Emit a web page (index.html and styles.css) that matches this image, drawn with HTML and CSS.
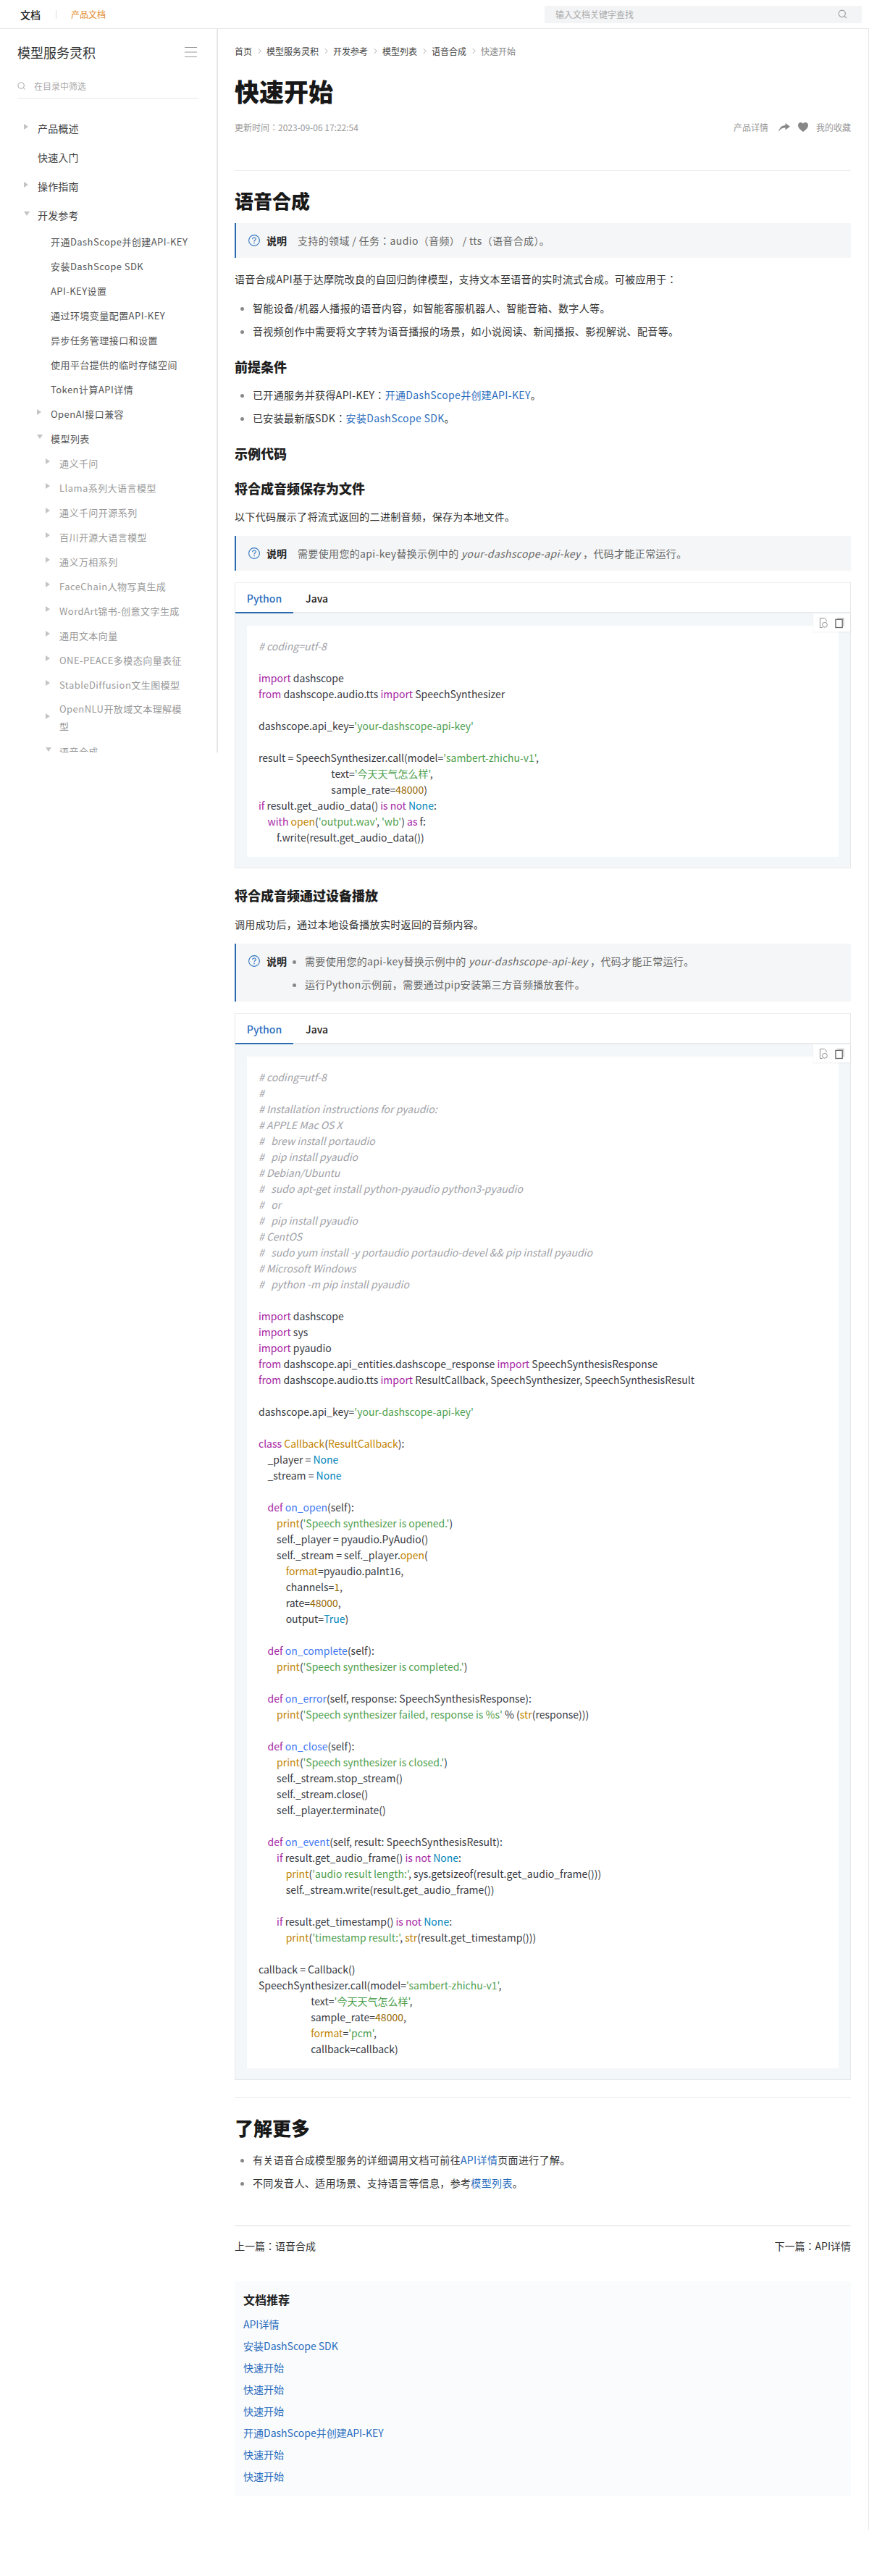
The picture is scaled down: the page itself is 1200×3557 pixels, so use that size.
FILE: index.html
```html
<!DOCTYPE html>
<html>
<head>
<meta charset="utf-8">
<title>快速开始</title>
<link rel="stylesheet" href="styles.css">
</head>
<body>
<header class="topbar">
  <div class="topbar-left">
    <span class="brand">文档</span>
    <span class="brand-sep"></span>
    <span class="brand-link">产品文档</span>
  </div>
  <div class="doc-search">
    <span>输入文档关键字查找</span>
    <svg class="icon-search" viewBox="0 0 14 14"><circle cx="6.2" cy="6.2" r="5" fill="none" stroke="#999" stroke-width="1.1"/><path d="M9.8 9.8 L13 13" stroke="#999" stroke-width="1.1"/></svg>
  </div>
</header>
<div class="layout">
  <aside class="sidebar">
    <div class="side-head">
      <span class="side-title">模型服务灵积</span>
      <svg class="hamburger" viewBox="0 0 17 14"><path d="M0 .5H17M0 7H17M0 13.5H17" stroke="#999" stroke-width="1"/></svg>
    </div>
    <div class="side-filter">
      <svg class="filter-icon" viewBox="0 0 14 14"><circle cx="6" cy="6" r="4.8" fill="none" stroke="#999" stroke-width="1"/><path d="M9.5 9.5 L12.5 12.5" stroke="#999" stroke-width="1"/></svg>
      <span>在目录中筛选</span>
    </div>
    <nav class="tree">
      <div class="row l1"><i class="arr right"></i>产品概述</div>
      <div class="row l1"><i class="arr none"></i>快速入门</div>
      <div class="row l1"><i class="arr right"></i>操作指南</div>
      <div class="row l1 last"><i class="arr down"></i>开发参考</div>
      <div class="row leaf">开通DashScope并创建API-KEY</div>
      <div class="row leaf">安装DashScope SDK</div>
      <div class="row leaf">API-KEY设置</div>
      <div class="row leaf">通过环境变量配置API-KEY</div>
      <div class="row leaf">异步任务管理接口和设置</div>
      <div class="row leaf">使用平台提供的临时存储空间</div>
      <div class="row leaf">Token计算API详情</div>
      <div class="row l2"><i class="arr right"></i>OpenAI接口兼容</div>
      <div class="row l2"><i class="arr down"></i>模型列表</div>
      <div class="row l3"><i class="arr right"></i>通义千问</div>
      <div class="row l3"><i class="arr right"></i>Llama系列大语言模型</div>
      <div class="row l3"><i class="arr right"></i>通义千问开源系列</div>
      <div class="row l3"><i class="arr right"></i>百川开源大语言模型</div>
      <div class="row l3"><i class="arr right"></i>通义万相系列</div>
      <div class="row l3"><i class="arr right"></i>FaceChain人物写真生成</div>
      <div class="row l3"><i class="arr right"></i>WordArt锦书-创意文字生成</div>
      <div class="row l3"><i class="arr right"></i>通用文本向量</div>
      <div class="row l3"><i class="arr right"></i>ONE-PEACE多模态向量表征</div>
      <div class="row l3"><i class="arr right"></i>StableDiffusion文生图模型</div>
      <div class="row l3 wrap"><i class="arr right"></i><span>OpenNLU开放域文本理解模型</span></div>
      <div class="row l3"><i class="arr down"></i>语音合成</div>
    </nav>
  </aside>
  <main class="content">
    <div class="crumbs">
      <span>首页</span><svg class="chev" viewBox="0 0 6 10"><path d="M1 1 L5 5 L1 9" fill="none" stroke="#999"/></svg>
      <span>模型服务灵积</span><svg class="chev" viewBox="0 0 6 10"><path d="M1 1 L5 5 L1 9" fill="none" stroke="#999"/></svg>
      <span>开发参考</span><svg class="chev" viewBox="0 0 6 10"><path d="M1 1 L5 5 L1 9" fill="none" stroke="#999"/></svg>
      <span>模型列表</span><svg class="chev" viewBox="0 0 6 10"><path d="M1 1 L5 5 L1 9" fill="none" stroke="#999"/></svg>
      <span>语音合成</span><svg class="chev" viewBox="0 0 6 10"><path d="M1 1 L5 5 L1 9" fill="none" stroke="#999"/></svg>
      <span class="crumb-cur">快速开始</span>
    </div>
    <h1 class="page-title">快速开始</h1>
    <div class="meta">
      <span>更新时间：2023-09-06 17:22:54</span>
      <div class="meta-actions">
        <span>产品详情</span>
        <svg class="icon-share" viewBox="0 0 16 12"><path d="M9.5 0 L16 4.8 L9.5 9.4 V6.6 C5.5 6.4 2.5 8 0 12 C1 6.5 4.5 3.2 9.5 2.9 Z" fill="#888"/></svg>
        <svg class="icon-heart" viewBox="0 0 14 13"><path d="M7 13 C3 10 0 7.5 0 4 C0 1.6 1.8 0 3.8 0 C5.2 0 6.3.7 7 1.8 C7.7.7 8.8 0 10.2 0 C12.2 0 14 1.6 14 4 C14 7.5 11 10 7 13 Z" fill="#888"/></svg>
        <span>我的收藏</span>
      </div>
    </div>

    <h2 class="h-big first">语音合成</h2>
    <div class="note n-a">
      <svg class="q" viewBox="0 0 16 16"><circle cx="8" cy="8" r="7.4" fill="none" stroke="#2e74c0" stroke-width="1.1"/><path d="M5.7 6.2 C5.7 4.8 6.8 4 8 4 C9.3 4 10.3 4.9 10.3 6 C10.3 7.5 8 7.6 8 9.4" fill="none" stroke="#2e74c0" stroke-width="1.1"/><circle cx="8" cy="11.6" r=".8" fill="#2e74c0"/></svg>
      <b class="note-label">说明</b>
      <div class="note-text">支持的领域 / 任务：audio（音频） / tts（语音合成）。</div>
    </div>
    <p class="para m-17">语音合成API基于达摩院改良的自回归韵律模型，支持文本至语音的实时流式合成。可被应用于：</p>
    <ul class="list m-16">
      <li>智能设备/机器人播报的语音内容，如智能客服机器人、智能音箱、数字人等。</li>
      <li>音视频创作中需要将文字转为语音播报的场景，如小说阅读、新闻播报、影视解说、配音等。</li>
    </ul>
    <h3 class="h-mid m-24">前提条件</h3>
    <ul class="list m-14">
      <li>已开通服务并获得API-KEY：<a>开通DashScope并创建API-KEY</a>。</li>
      <li>已安装最新版SDK：<a>安装DashScope SDK</a>。</li>
    </ul>
    <h3 class="h-mid m-24">示例代码</h3>
    <h3 class="h-mid m-22">将合成音频保存为文件</h3>
    <p class="para m-14">以下代码展示了将流式返回的二进制音频，保存为本地文件。</p>
    <div class="note m-15">
      <svg class="q" viewBox="0 0 16 16"><circle cx="8" cy="8" r="7.4" fill="none" stroke="#2e74c0" stroke-width="1.1"/><path d="M5.7 6.2 C5.7 4.8 6.8 4 8 4 C9.3 4 10.3 4.9 10.3 6 C10.3 7.5 8 7.6 8 9.4" fill="none" stroke="#2e74c0" stroke-width="1.1"/><circle cx="8" cy="11.6" r=".8" fill="#2e74c0"/></svg>
      <b class="note-label">说明</b>
      <div class="note-text">需要使用您的api-key替换示例中的 <em>your-dashscope-api-key</em> ，代码才能正常运行。</div>
    </div>
    <div class="codebox">
      <div class="tabs"><span class="tab on">Python</span><span class="tab">Java</span></div>
      <div class="panel">
        <div class="tools">
          <svg viewBox="0 0 14 16"><path d="M8 1H1.5V15H5M8 1L11 4V6" fill="none" stroke="#888"/><circle cx="8.5" cy="11" r="3.7" fill="none" stroke="#888"/></svg>
          <svg viewBox="0 0 14 16"><rect x="1" y="3" width="10" height="12" fill="none" stroke="#666" stroke-width="1.4"/><path d="M3.5 1H13V13" fill="none" stroke="#aaa"/></svg>
        </div>
        <div class="code">
<div class="ln"><span class="c"># coding=utf-8</span></div>
<div class="ln"></div>
<div class="ln"><span class="k">import</span> dashscope</div>
<div class="ln"><span class="k">from</span> dashscope.audio.tts <span class="k">import</span> SpeechSynthesizer</div>
<div class="ln"></div>
<div class="ln">dashscope.api_key=<span class="s">'your-dashscope-api-key'</span></div>
<div class="ln"></div>
<div class="ln">result = SpeechSynthesizer.call(model=<span class="s">'sambert-zhichu-v1'</span>,</div>
<div class="ln">                                text=<span class="s">'今天天气怎么样'</span>,</div>
<div class="ln">                                sample_rate=<span class="n">48000</span>)</div>
<div class="ln"><span class="k">if</span> result.get_audio_data() <span class="k">is</span> <span class="k">not</span> <span class="l">None</span>:</div>
<div class="ln">    <span class="k">with</span> <span class="b">open</span>(<span class="s">'output.wav'</span>, <span class="s">'wb'</span>) <span class="k">as</span> f:</div>
<div class="ln">        f.write(result.get_audio_data())</div>
        </div>
      </div>
    </div>

    <h3 class="h-mid m-24">将合成音频通过设备播放</h3>
    <p class="para m-15">调用成功后，通过本地设备播放实时返回的音频内容。</p>
    <div class="note m-15">
      <svg class="q" viewBox="0 0 16 16"><circle cx="8" cy="8" r="7.4" fill="none" stroke="#2e74c0" stroke-width="1.1"/><path d="M5.7 6.2 C5.7 4.8 6.8 4 8 4 C9.3 4 10.3 4.9 10.3 6 C10.3 7.5 8 7.6 8 9.4" fill="none" stroke="#2e74c0" stroke-width="1.1"/><circle cx="8" cy="11.6" r=".8" fill="#2e74c0"/></svg>
      <b class="note-label">说明</b>
      <ul class="note-list">
        <li>需要使用您的api-key替换示例中的 <em>your-dashscope-api-key</em> ，代码才能正常运行。</li>
        <li>运行Python示例前，需要通过pip安装第三方音频播放套件。</li>
      </ul>
    </div>
    <div class="codebox">
      <div class="tabs"><span class="tab on">Python</span><span class="tab">Java</span></div>
      <div class="panel">
        <div class="tools">
          <svg viewBox="0 0 14 16"><path d="M8 1H1.5V15H5M8 1L11 4V6" fill="none" stroke="#888"/><circle cx="8.5" cy="11" r="3.7" fill="none" stroke="#888"/></svg>
          <svg viewBox="0 0 14 16"><rect x="1" y="3" width="10" height="12" fill="none" stroke="#666" stroke-width="1.4"/><path d="M3.5 1H13V13" fill="none" stroke="#aaa"/></svg>
        </div>
        <div class="code">
<div class="ln"><span class="c"># coding=utf-8</span></div>
<div class="ln"><span class="c">#</span></div>
<div class="ln"><span class="c"># Installation instructions for pyaudio:</span></div>
<div class="ln"><span class="c"># APPLE Mac OS X</span></div>
<div class="ln"><span class="c">#   brew install portaudio</span></div>
<div class="ln"><span class="c">#   pip install pyaudio</span></div>
<div class="ln"><span class="c"># Debian/Ubuntu</span></div>
<div class="ln"><span class="c">#   sudo apt-get install python-pyaudio python3-pyaudio</span></div>
<div class="ln"><span class="c">#   or</span></div>
<div class="ln"><span class="c">#   pip install pyaudio</span></div>
<div class="ln"><span class="c"># CentOS</span></div>
<div class="ln"><span class="c">#   sudo yum install -y portaudio portaudio-devel &amp;&amp; pip install pyaudio</span></div>
<div class="ln"><span class="c"># Microsoft Windows</span></div>
<div class="ln"><span class="c">#   python -m pip install pyaudio</span></div>
<div class="ln"></div>
<div class="ln"><span class="k">import</span> dashscope</div>
<div class="ln"><span class="k">import</span> sys</div>
<div class="ln"><span class="k">import</span> pyaudio</div>
<div class="ln"><span class="k">from</span> dashscope.api_entities.dashscope_response <span class="k">import</span> SpeechSynthesisResponse</div>
<div class="ln"><span class="k">from</span> dashscope.audio.tts <span class="k">import</span> ResultCallback, SpeechSynthesizer, SpeechSynthesisResult</div>
<div class="ln"></div>
<div class="ln">dashscope.api_key=<span class="s">'your-dashscope-api-key'</span></div>
<div class="ln"></div>
<div class="ln"><span class="k">class</span> <span class="b">Callback</span>(<span class="b">ResultCallback</span>):</div>
<div class="ln">    _player = <span class="l">None</span></div>
<div class="ln">    _stream = <span class="l">None</span></div>
<div class="ln"></div>
<div class="ln">    <span class="k">def</span> <span class="t">on_open</span>(self):</div>
<div class="ln">        <span class="b">print</span>(<span class="s">'Speech synthesizer is opened.'</span>)</div>
<div class="ln">        self._player = pyaudio.PyAudio()</div>
<div class="ln">        self._stream = self._player.<span class="b">open</span>(</div>
<div class="ln">            <span class="b">format</span>=pyaudio.paInt16,</div>
<div class="ln">            channels=<span class="n">1</span>,</div>
<div class="ln">            rate=<span class="n">48000</span>,</div>
<div class="ln">            output=<span class="l">True</span>)</div>
<div class="ln"></div>
<div class="ln">    <span class="k">def</span> <span class="t">on_complete</span>(self):</div>
<div class="ln">        <span class="b">print</span>(<span class="s">'Speech synthesizer is completed.'</span>)</div>
<div class="ln"></div>
<div class="ln">    <span class="k">def</span> <span class="t">on_error</span>(self, response: SpeechSynthesisResponse):</div>
<div class="ln">        <span class="b">print</span>(<span class="s">'Speech synthesizer failed, response is %s'</span> % (<span class="b">str</span>(response)))</div>
<div class="ln"></div>
<div class="ln">    <span class="k">def</span> <span class="t">on_close</span>(self):</div>
<div class="ln">        <span class="b">print</span>(<span class="s">'Speech synthesizer is closed.'</span>)</div>
<div class="ln">        self._stream.stop_stream()</div>
<div class="ln">        self._stream.close()</div>
<div class="ln">        self._player.terminate()</div>
<div class="ln"></div>
<div class="ln">    <span class="k">def</span> <span class="t">on_event</span>(self, result: SpeechSynthesisResult):</div>
<div class="ln">        <span class="k">if</span> result.get_audio_frame() <span class="k">is</span> <span class="k">not</span> <span class="l">None</span>:</div>
<div class="ln">            <span class="b">print</span>(<span class="s">'audio result length:'</span>, sys.getsizeof(result.get_audio_frame()))</div>
<div class="ln">            self._stream.write(result.get_audio_frame())</div>
<div class="ln"></div>
<div class="ln">        <span class="k">if</span> result.get_timestamp() <span class="k">is</span> <span class="k">not</span> <span class="l">None</span>:</div>
<div class="ln">            <span class="b">print</span>(<span class="s">'timestamp result:'</span>, <span class="b">str</span>(result.get_timestamp()))</div>
<div class="ln"></div>
<div class="ln">callback = Callback()</div>
<div class="ln">SpeechSynthesizer.call(model=<span class="s">'sambert-zhichu-v1'</span>,</div>
<div class="ln">                       text=<span class="s">'今天天气怎么样'</span>,</div>
<div class="ln">                       sample_rate=<span class="n">48000</span>,</div>
<div class="ln">                       <span class="b">format</span>=<span class="s">'pcm'</span>,</div>
<div class="ln">                       callback=callback)</div>
        </div>
      </div>
    </div>

    <hr class="rule m-24">
    <h2 class="h-big m-23">了解更多</h2>
    <ul class="list m-14">
      <li>有关语音合成模型服务的详细调用文档可前往<a>API详情</a>页面进行了解。</li>
      <li>不同发音人、适用场景、支持语言等信息，参考<a>模型列表</a>。</li>
    </ul>
    <hr class="rule grey m-47">
    <div class="pager">
      <span>上一篇：语音合成</span>
      <span>下一篇：API详情</span>
    </div>
    <section class="recs">
      <h4 class="recs-title">文档推荐</h4>
      <a>API详情</a>
      <a>安装DashScope SDK</a>
      <a>快速开始</a>
      <a>快速开始</a>
      <a>快速开始</a>
      <a>开通DashScope并创建API-KEY</a>
      <a>快速开始</a>
      <a>快速开始</a>
    </section>
  </main>
</div>
</body>
</html>
```
FILE: styles.css
```css
* { box-sizing: border-box; }
html, body { margin: 0; padding: 0; }
body {
  font-family: "Noto Sans CJK JP", "Noto Sans CJK SC", "Noto Sans", sans-serif;
  font-size: 14px;
  color: #333;
  background: #fff;
}
a { color: #2a6dbe; }
.topbar {
  height: 40px;
  border-bottom: 1px solid #e6e6e6;
  display: flex;
  align-items: center;
  justify-content: space-between;
  padding: 0 10px 0 28px;
}
.topbar-left { display: flex; align-items: center; }
.brand { font-size: 14px; font-weight: 500; color: #222; }
.brand-sep { width: 1px; height: 12px; background: #ddd; margin: 0 20px 0 21px; }
.brand-link { font-size: 12px; color: #e08a2c; }
.doc-search {
  width: 438px;
  height: 24px;
  background: #f3f4f5;
  display: flex;
  align-items: center;
  justify-content: space-between;
  padding: 0 20px 0 15px;
  font-size: 12px;
  color: #aaa;
}
.icon-search { width: 13px; height: 13px; }
.layout { display: flex; align-items: flex-start; }
.sidebar {
  width: 301px;
  height: 999px;
  flex: none;
  overflow: hidden;
  border-right: 2px solid #e8e8e8;
  padding: 17px 24px 0 24px;
}
.side-head {
  height: 30px;
  display: flex;
  align-items: center;
  justify-content: space-between;
  padding-right: 3px;
}
.side-title { font-size: 18px; color: #333; }
.hamburger { width: 17px; height: 14px; }
.side-filter {
  height: 32px;
  margin-top: 17px;
  border-bottom: 1px solid #e6e6e6;
  display: flex;
  align-items: center;
  gap: 11px;
  font-size: 12px;
  color: #aaa;
  padding-bottom: 2px;
}
.filter-icon { width: 12px; height: 12px; }
.tree { margin: 21px -24px 0 -24px; }
.row { display: flex; align-items: center; }
.arr { flex: none; width: 19px; height: 8px; position: relative; margin-top: -4px; }
.arr.right::before {
  content: ""; position: absolute; left: 0; top: 0;
  border-left: 6px solid #c4c4c4; border-top: 4px solid transparent; border-bottom: 4px solid transparent;
}
.arr.down::before {
  content: ""; position: absolute; left: 0; top: 1px;
  border-top: 6px solid #c4c4c4; border-left: 4px solid transparent; border-right: 4px solid transparent;
}
.l1 { height: 40px; padding-left: 33px; font-size: 14px; color: #444; letter-spacing: .15px; }
.l1.last { margin-bottom: -1px; }
.leaf { height: 34px; padding-left: 70px; font-size: 13px; color: #555; letter-spacing: .45px; }
.l2 { height: 34px; padding-left: 51px; font-size: 13px; color: #555; letter-spacing: .45px; }
.l3 { height: 34px; padding-left: 63px; font-size: 13px; color: #999; letter-spacing: .45px; padding-right: 37px; }
.l3.wrap { height: 58px; line-height: 24px; }

.content {
  flex: 1;
  min-width: 0;
  border-right: 1px solid #e8e8e8;
  padding: 20px 24px 46px 23px;
}
.crumbs { display: flex; align-items: center; height: 20px; font-size: 12px; color: #444; }
.chev { width: 5px; height: 9px; margin: 0 7px 0 8px; }
.crumb-cur { color: #888; }
.page-title { margin: 24px 0 0; font-size: 34px; line-height: 44px; font-weight: 900; color: #181818; }
.meta {
  margin-top: 18px;
  padding-bottom: 49px;
  border-bottom: 1px solid #eee;
  display: flex;
  justify-content: space-between;
  align-items: flex-start;
  font-size: 12px;
  line-height: 20px;
  color: #999;
}
.meta-actions { display: flex; align-items: center; height: 20px; }
.icon-share { width: 16px; height: 12px; margin: 0 11px 0 14px; }
.icon-heart { width: 14px; height: 13px; margin: -2px 11px 0 0; }
.h-big { margin: 0; font-size: 26px; line-height: 36px; font-weight: 900; color: #181818; }
.h-big.first { margin-top: 23px; }
.h-mid { margin: 0; font-size: 18px; line-height: 26px; font-weight: 900; color: #1e1e1e; }
.para { margin: 0; line-height: 24px; color: #333; letter-spacing: .35px; }
.list { margin: 0; padding: 0 0 0 25px; color: #333; line-height: 24px; letter-spacing: .35px; }
.list li { margin-bottom: 8px; }
.list li:last-child { margin-bottom: 0; }
.list li::marker, .note-list li::marker { color: #888; }
.m-14 { margin-top: 14px; }
.m-15 { margin-top: 15px; }
.m-16 { margin-top: 16px; }
.m-17 { margin-top: 17px; }
.m-22 { margin-top: 22px; }
.m-23 { margin-top: 23px; }
.m-24 { margin-top: 24px; }
.m-47 { margin-top: 47px; }
.note {
  display: flex;
  align-items: flex-start;
  background: #f5f6f7;
  border-left: 2px solid #2a6bb0;
  padding: 12px 16px 12px 17px;
  line-height: 24px;
}
.note.n-a { margin-top: 13px; }
.q { flex: none; width: 16px; height: 16px; margin-top: 4px; }
.note-label { flex: none; margin-left: 9px; font-weight: 700; color: #222; }
.note-text { margin-left: 15px; color: #666; letter-spacing: .35px; }
.note-list { margin: 0; padding: 0 0 0 25px; color: #666; letter-spacing: .35px; }
.note-list li { margin-bottom: 8px; }
.note-list li:last-child { margin-bottom: 0; }
.codebox { margin-top: 16px; border: 1px solid #e8e8e8; border-top-color: #eee; }
.tabs { display: flex; height: 42px; border-bottom: 2px solid #e8ecef; }
.tab {
  width: 80px;
  height: 42px;
  text-align: center;
  line-height: 42px;
  font-weight: 500;
  color: #222;
}
.tab + .tab { width: auto; padding-left: 17px; }
.tab.on { color: #2a6dbe; border-bottom: 2px solid #2a6bb0; }
.panel { position: relative; background: #f4f7f9; padding: 17px 16px 15px; }
.tools {
  position: absolute;
  top: 0;
  right: 0;
  width: 51px;
  height: 25px;
  background: #fff;
  box-shadow: 0 1px 3px rgba(0,0,0,.06);
  display: flex;
  align-items: center;
  justify-content: space-around;
  padding: 0 4px;
}
.tools svg { width: 13px; height: 16px; }
.code {
  padding: 17px 16px 16px;
  background: #fff;
  font-size: 14px;
  color: #383a42;
  overflow: hidden;
}
.ln { height: 22px; line-height: 22px; white-space: pre; }
.c { color: #a0a1a7; font-style: italic; }
.k { color: #a626a4; }
.s { color: #50a14f; }
.n { color: #986801; }
.b { color: #c18401; }
.t { color: #4078f2; }
.l { color: #0184bb; }
.rule { border: 0; border-top: 1px solid #eee; margin-bottom: 0; margin-left: 0; margin-right: 0; height: 0; }
.rule.m-47 { border-top-color: #ddd; }
.pager { margin-top: 15px; display: flex; justify-content: space-between; line-height: 24px; color: #333; }
.recs {
  margin-top: 37px;
  padding: 10px 12px 13px;
  background: #fafbfc;
  display: flex;
  flex-direction: column;
  align-items: flex-start;
}
.recs-title { margin: 0 0 4px; font-size: 16px; line-height: 30px; font-weight: 700; color: #222; }
.recs a { line-height: 30px; }
```
